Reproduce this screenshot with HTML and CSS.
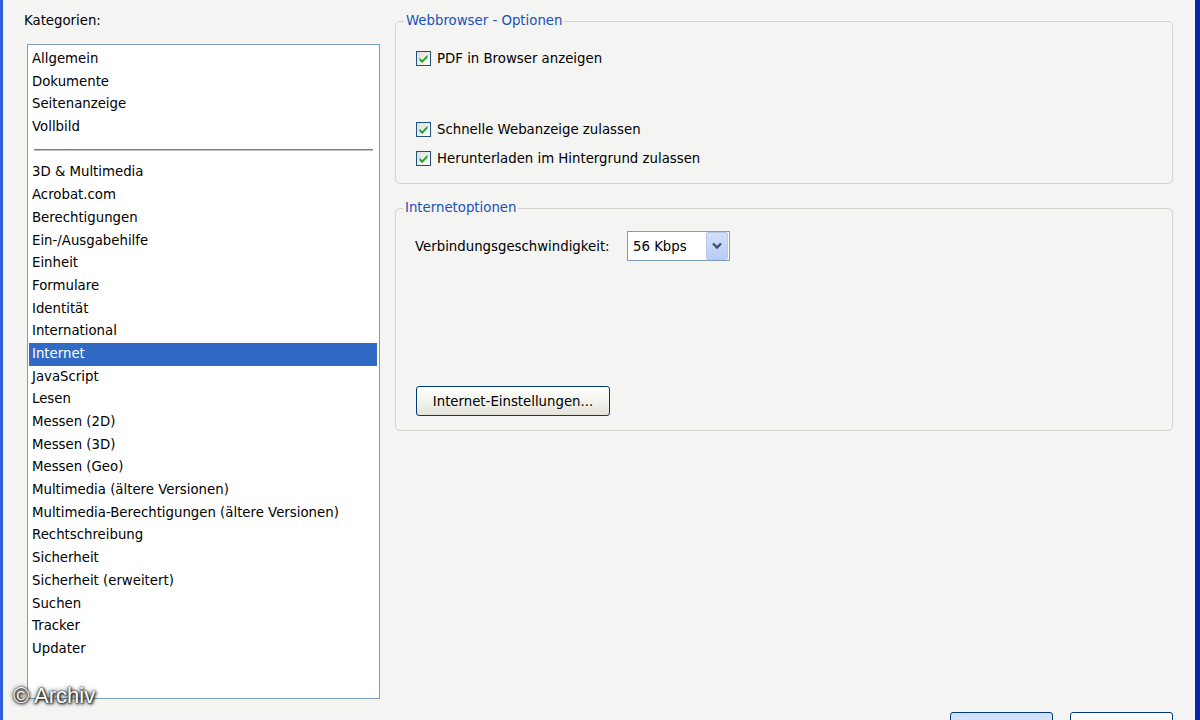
FILE: index.html
```html
<!DOCTYPE html>
<html lang="de">
<head>
    <meta charset="UTF-8">
    <title>Voreinstellungen - Internet</title>
    <link rel="stylesheet" href="styles.css">
</head>
<body>
    <!-- Dialogfenster -->
    <div class="window">
        <!-- Kategorienliste links -->
        <div class="sidebar">
            <div class="label">Kategorien:</div>
            <ul class="list">
                <li>Allgemein</li>
                <li>Dokumente</li>
                <li>Seitenanzeige</li>
                <li>Vollbild</li>
                <li class="separator"></li>
                <li>3D &amp; Multimedia</li>
                <li>Acrobat.com</li>
                <li>Berechtigungen</li>
                <li>Ein-/Ausgabehilfe</li>
                <li>Einheit</li>
                <li>Formulare</li>
                <li>Identität</li>
                <li>International</li>
                <li class="selected">Internet</li>
                <li>JavaScript</li>
                <li>Lesen</li>
                <li>Messen (2D)</li>
                <li>Messen (3D)</li>
                <li>Messen (Geo)</li>
                <li>Multimedia (ältere Versionen)</li>
                <li>Multimedia-Berechtigungen (ältere Versionen)</li>
                <li>Rechtschreibung</li>
                <li>Sicherheit</li>
                <li>Sicherheit (erweitert)</li>
                <li>Suchen</li>
                <li>Tracker</li>
                <li>Updater</li>
            </ul>
        </div>

        <!-- Einstellungen rechts -->
        <div class="main">
            <fieldset class="group group-web">
                <legend>Webbrowser - Optionen</legend>
                <label class="check">
                    <span class="box"><svg viewBox="0 0 13 13" width="13" height="13"><path d="M2.5 5.6 L5.2 8.2 L10.5 2.8 L10.5 5.6 L5.2 11 L2.5 8.4 Z" fill="#21a121"/></svg></span>
                    PDF in Browser anzeigen
                </label>
                <div class="spacer"></div>
                <label class="check">
                    <span class="box"><svg viewBox="0 0 13 13" width="13" height="13"><path d="M2.5 5.6 L5.2 8.2 L10.5 2.8 L10.5 5.6 L5.2 11 L2.5 8.4 Z" fill="#21a121"/></svg></span>
                    Schnelle Webanzeige zulassen
                </label>
                <label class="check">
                    <span class="box"><svg viewBox="0 0 13 13" width="13" height="13"><path d="M2.5 5.6 L5.2 8.2 L10.5 2.8 L10.5 5.6 L5.2 11 L2.5 8.4 Z" fill="#21a121"/></svg></span>
                    Herunterladen im Hintergrund zulassen
                </label>
            </fieldset>

            <fieldset class="group group-net">
                <legend>Internetoptionen</legend>
                <div class="row">
                    <span class="row-label">Verbindungsgeschwindigkeit:</span>
                    <div class="combo">
                        <span class="combo-value">56 Kbps</span>
                        <span class="combo-drop"><svg viewBox="0 0 10 8" width="10" height="8"><path d="M1 1.5 L5 5.5 L9 1.5" fill="none" stroke="#3c4f78" stroke-width="2.4"/></svg></span>
                    </div>
                </div>
                <button class="btn btn-settings">Internet-Einstellungen...</button>
            </fieldset>

            <!-- Dialogknöpfe (unten abgeschnitten) -->
            <div class="actions">
                <button class="btn btn-default"></button>
                <button class="btn"></button>
            </div>
        </div>

        <div class="watermark">© Archiv</div>
    </div>
</body>
</html>
```

FILE: styles.css
```css
/* Grundlayout */
body {
    margin: 0;
    font-family: "DejaVu Sans", Verdana, sans-serif;
    font-size: 13.3px;
    color: #000;
    background-color: #f4f4f2;
}

.window {
    position: relative;
    display: flex;
    width: 1200px;
    height: 720px;
    box-sizing: border-box;
    border-left: 3px solid #2d5fe2;
    border-right: 5px solid #0b24a8;
    background-color: #f4f4f2;
    overflow: hidden;
}

/* Kategorienliste */
.sidebar {
    width: 392px;
    padding: 12px 0 0 21px;
    box-sizing: border-box;
}

.label {
    line-height: 18px;
    margin-bottom: 14px;
}

.list {
    list-style: none;
    margin: 0 0 0 3px;
    padding: 3px 2px 0 1px;
    width: 353px;
    height: 655px;
    box-sizing: border-box;
    border: 1px solid #7f9db9;
    background-color: #fff;
}

.list li {
    height: 22.7px;
    line-height: 22.7px;
    padding-left: 3px;
    white-space: nowrap;
}

.list .separator {
    margin: 0 4px 0 5px;
    padding: 0;
    display: flex;
    align-items: center;
}

.list .separator::after {
    content: "";
    flex: 1;
    height: 1px;
    border-top: 1px solid #6f8096;
    background-color: #b9c3d0;
}

.list .selected {
    background-color: #316ac5;
    color: #fff;
}

/* Rechte Seite */
.main {
    flex: 1;
    display: flex;
    flex-direction: column;
    padding: 12px 22px 0 0;
}

.group {
    margin: 0;
    padding: 0 20px 14px 20px;
    border: 1px solid #d3d3cb;
    border-radius: 5px;
    display: flex;
    flex-direction: column;
}

.group legend {
    margin-left: -12px;
    padding: 0 2px;
    line-height: 18px;
    color: #1d50b8;
}

.group-web {
    padding-top: 17px;
    gap: 7px;
}

.group-net {
    margin-top: 15px;
    padding-top: 14px;
    padding-left: 19px;
}

.spacer {
    height: 35px;
}

/* Kontrollkästchen */
.check {
    display: flex;
    align-items: center;
    gap: 6px;
    height: 22px;
}

.box {
    width: 13px;
    height: 13px;
    border: 1px solid #1c5180;
    background: linear-gradient(135deg, #dcdcd7, #fff);
    display: flex;
}

/* Verbindungsgeschwindigkeit */
.row {
    display: flex;
    align-items: center;
    gap: 14px;
}

.row-label {
    width: 198px;
}

.combo {
    display: flex;
    align-items: center;
    width: 103px;
    height: 30px;
    box-sizing: border-box;
    border: 1px solid #7f9db9;
    background-color: #fff;
}

.combo-value {
    flex: 1;
    padding-left: 5px;
}

.combo-drop {
    width: 22px;
    height: 28px;
    margin-right: 1px;
    box-sizing: border-box;
    border: 1px solid #b7c9ef;
    border-radius: 2px;
    background: linear-gradient(#d3e0fb, #b9ccf5);
    display: flex;
    align-items: center;
    justify-content: center;
}

/* Knöpfe */
.btn {
    font-family: inherit;
    font-size: 13.3px;
    height: 30px;
    border: 1px solid #003c74;
    border-radius: 3px;
    background: linear-gradient(#ffffff, #f0f0ea 60%, #e3e3db);
    color: #000;
    padding: 0;
}

.btn-settings {
    width: 194px;
    margin-top: 125px;
    margin-left: 1px;
}

.actions {
    display: flex;
    justify-content: flex-end;
    gap: 17px;
    margin-top: 281px;
}

.actions .btn {
    width: 103px;
    flex-shrink: 0;
}

.btn-default {
    background: linear-gradient(#cfe0fb, #e8effc);
}

/* Wasserzeichen über der Liste */
.watermark {
    position: absolute;
    left: 10px;
    top: 683px;
    font-family: "Liberation Sans", Arial, sans-serif;
    font-size: 22px;
    color: #fff;
    text-shadow: 0 0 2px #000, 1px 1px 3px #000, 0 0 5px #333;
}
```
